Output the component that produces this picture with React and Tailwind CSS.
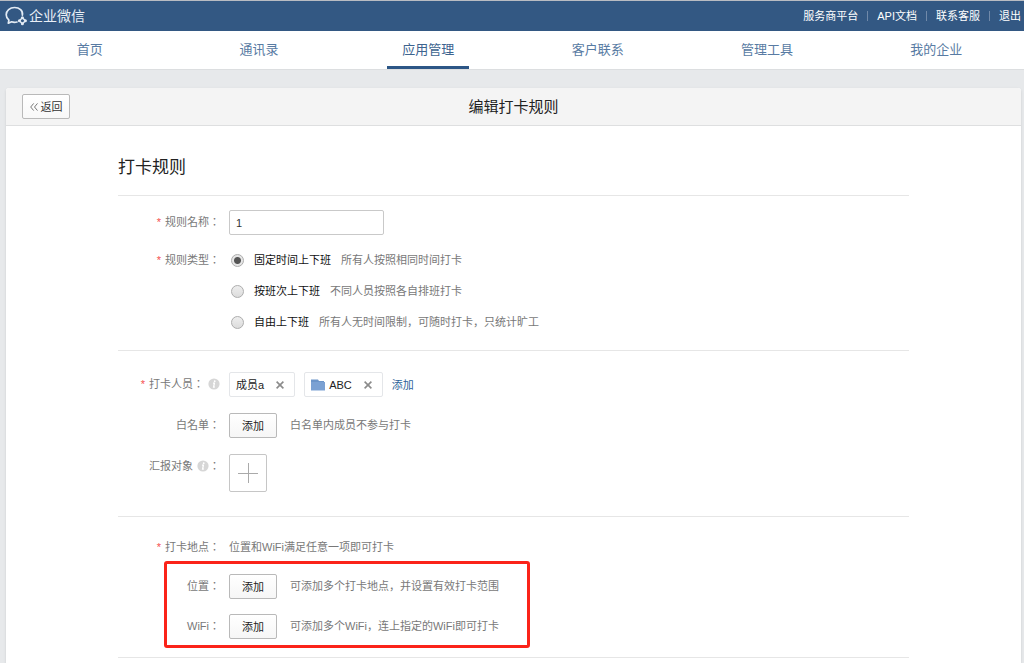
import React, { useState } from 'react';
import { clsx } from 'clsx';

const topLinks = ['服务商平台', 'API文档', '联系客服', '退出'];

const navItems = ['首页', '通讯录', '应用管理', '客户联系', '管理工具', '我的企业'];

const ruleTypes = [
    { id: 'fixed', name: '固定时间上下班', desc: '所有人按照相同时间打卡' },
    { id: 'shift', name: '按班次上下班', desc: '不同人员按照各自排班打卡' },
    { id: 'free', name: '自由上下班', desc: '所有人无时间限制，可随时打卡，只统计旷工' },
];

function Logo() {
    return (
        <svg width="22" height="20" viewBox="0 0 22 20" fill="none" stroke="#e3ebf4" strokeLinecap="round" strokeLinejoin="round" aria-hidden="true">
            <path strokeWidth="1.7" d="M17.4 9.2C18.2 4.8 14.4 1.5 9.6 1.5C4.8 1.5 1.2 4.6 1.2 8.8C1.2 11 2.3 12.9 3.9 14.2L3.3 17.2L6.6 15.8C8.6 16.5 10.4 16.4 12 16" />
            <path strokeWidth="1.5" d="M17.4 11.8L20.4 14.8L17.4 17.8L14.4 14.8Z" />
            <g fill="#e3ebf4" stroke="none">
                <circle cx="17.4" cy="11.8" r="1.5" />
                <circle cx="20.4" cy="14.8" r="1.5" />
                <circle cx="17.4" cy="17.8" r="1.5" />
                <circle cx="14.4" cy="14.8" r="1.5" />
            </g>
        </svg>
    );
}

function InfoIcon() {
    return (
        <svg width="12" height="12" viewBox="0 0 12 12" className="ml-1" aria-hidden="true">
            <circle cx="6" cy="6" r="5.6" fill="#d6d6d6" />
            <circle cx="6.7" cy="3.2" r="0.9" fill="#fff" />
            <path d="M5 5.2H6.4L5.6 9H6.8" fill="none" stroke="#fff" strokeWidth="1.3" />
        </svg>
    );
}

function FolderIcon() {
    return (
        <svg width="14" height="12" viewBox="0 0 14 12" className="mr-1" aria-hidden="true">
            <path d="M0 0.5H7L8 2H13V3H0Z" fill="#6c95c9" />
            <path d="M0 3H14V11.5H0Z" fill="#7ba1d3" />
        </svg>
    );
}

function CloseIcon() {
    return (
        <svg width="8" height="8" viewBox="0 0 8 8" stroke="#8b8b8b" strokeWidth="1.6" aria-hidden="true">
            <path d="M0.6 0.6L7.4 7.4M7.4 0.6L0.6 7.4" />
        </svg>
    );
}

function Hint({ children, className }) {
    return <span className={clsx('text-[#787878]', className)}>{children}</span>;
}

// the TC face centres the full-width colon
function Row({ label, required, htmlFor, children, suffix, info }) {
    const Label = htmlFor ? 'label' : 'div';
    return (
        <div className="flex items-start gap-[9px]">
            <Label
                htmlFor={htmlFor}
                className="flex h-6 w-[102px] shrink-0 items-center justify-end font-['Liberation_Sans','Noto_Sans_CJK_TC',sans-serif] text-[#787878]"
            >
                {required && <span className="mr-1 text-[#f5504e]">*</span>}
                <span>{label}</span>
                {info && <InfoIcon />}
                {suffix && <span>{suffix}</span>}
            </Label>
            {children}
        </div>
    );
}

function AddButton() {
    return (
        <button className="h-[25px] w-12 shrink-0 rounded-[2px] border border-[#b9b9b9] bg-linear-to-b from-white to-[#f6f6f6] text-[#222]">
            添加
        </button>
    );
}

function Tag({ name, folder, onRemove }) {
    return (
        <span className="flex h-[25px] items-center rounded-[2px] border border-[#e4e6e9] pr-[10px] pl-[6px] text-[#222]">
            {folder && <FolderIcon />}
            <span>{name}</span>
            <button aria-label={name} onClick={onRemove} className="ml-3">
                <CloseIcon />
            </button>
        </span>
    );
}

export default function App() {
    const [activeNav, setActiveNav] = useState('应用管理');
    const [ruleName, setRuleName] = useState('1');
    const [ruleType, setRuleType] = useState('fixed');
    const [members, setMembers] = useState([
        { name: '成员a' },
        { name: 'ABC', folder: true },
    ]);

    return (
        <div className="flex min-h-screen flex-col bg-[#e7e9eb] font-['Liberation_Sans','Noto_Sans_CJK_SC',sans-serif] text-[11px] leading-4">
            <header className="flex h-[31px] items-center justify-between border-t border-[#b9bcc2] bg-[#335883] pr-[3px] pl-[5px] text-white">
                <a href="#" className="flex items-center gap-[2px] text-sm text-[#e9eff6]">
                    <Logo />
                    企业微信
                </a>
                <div className="flex items-center">
                    {topLinks.map((link, i) => (
                        <React.Fragment key={link}>
                            {i > 0 && <span className="mx-[9px] h-[10px] w-px bg-[#7089a9]" />}
                            <a href="#">{link}</a>
                        </React.Fragment>
                    ))}
                </div>
            </header>

            <nav className="border-b border-[#dcdee0] bg-white pr-[3px] pl-[5px]">
                <ul className="grid grid-cols-6">
                    {navItems.map(item => (
                        <li key={item} className="flex justify-center">
                            <a
                                href="#"
                                onClick={() => setActiveNav(item)}
                                className={clsx(
                                    'flex h-[38px] w-[82px] items-center justify-center border-t-[3px] border-b-[3px] border-t-transparent text-[13px]',
                                    activeNav === item
                                        ? 'border-b-[#2c5686] text-[#3d648f]'
                                        : 'border-b-transparent text-[#587ba3]'
                                )}
                            >
                                {item}
                            </a>
                        </li>
                    ))}
                </ul>
            </nav>

            <main className="mt-[18px] mr-[3px] ml-[6px] flex-1 rounded-t-[3px] bg-white shadow-sm">
                <div className="grid h-[38px] grid-cols-[1fr_auto_1fr] items-center rounded-t-[3px] border-b border-[#dedfe0] bg-[#f4f4f4] px-4">
                    <button className="flex h-[25px] w-12 items-center justify-center gap-[3px] rounded-[2px] border border-[#b9b9b9] bg-linear-to-b from-white to-[#f8f8f8] text-[#333]">
                        <svg width="8" height="8" viewBox="0 0 8 8" fill="none" stroke="#777" aria-hidden="true">
                            <path d="M3.7 0.4L0.7 4L3.7 7.6M7.5 0.4L4.5 4L7.5 7.6" />
                        </svg>
                        返回
                    </button>
                    <h1 className="text-[15px] leading-5 text-[#222]">编辑打卡规则</h1>
                </div>

                <form className="px-28" onSubmit={e => e.preventDefault()}>
                    <h2 className="border-b border-[#e6e6e6] pt-[29px] pb-[14px] text-[17px] leading-[26px] text-[#222]">打卡规则</h2>

                    <section className="border-b border-[#e6e6e6] pt-[14px] pb-5">
                        <Row label="规则名称：" required htmlFor="rule-name">
                            <input
                                id="rule-name"
                                value={ruleName}
                                onChange={e => setRuleName(e.target.value)}
                                className="h-[25px] w-[155px] rounded-[2px] border border-[#c9c9c9] px-[6px] text-[#333] outline-none"
                            />
                        </Row>
                        <div className="mt-[13px]">
                            <Row label="规则类型：" required>
                                <div className="flex flex-col gap-[15px] pt-1">
                                    {ruleTypes.map(type => (
                                        <label key={type.id} className="flex items-center pl-[2px]">
                                            <input
                                                type="radio"
                                                name="rule-type"
                                                checked={ruleType === type.id}
                                                onChange={() => setRuleType(type.id)}
                                                className="mr-[10px] size-[13px] appearance-none rounded-full border border-[#adadad] bg-linear-to-b from-[#eee] to-[#dcdcdc] checked:bg-[radial-gradient(circle,#555_0_3px,#e6e6e6_4px)]"
                                            />
                                            <span className="mr-[10px] text-[#111]">{type.name}</span>
                                            <Hint>{type.desc}</Hint>
                                        </label>
                                    ))}
                                </div>
                            </Row>
                        </div>
                    </section>

                    <section className="flex flex-col gap-4 border-b border-[#e6e6e6] pt-[21px] pb-6">
                        <Row label="打卡人员：" required info>
                            <div className="flex items-center gap-[9px]">
                                {members.map(m => (
                                    <Tag
                                        key={m.name}
                                        name={m.name}
                                        folder={m.folder}
                                        onRemove={() => setMembers(members.filter(x => x !== m))}
                                    />
                                ))}
                                <a href="#" className="text-[#2d6299]">添加</a>
                            </div>
                        </Row>
                        <Row label="白名单：">
                            <AddButton />
                            <Hint className="ml-1 leading-6">白名单内成员不参与打卡</Hint>
                        </Row>
                        <Row label="汇报对象" info suffix="：">
                            <button aria-label="添加" className="flex size-[38px] items-center justify-center rounded-[2px] border border-[#c6c6c6]">
                                <svg width="20" height="20" viewBox="0 0 20 20" stroke="#aaa" aria-hidden="true">
                                    <path d="M10.5 0V20M0 10.5H20" />
                                </svg>
                            </button>
                        </Row>
                    </section>

                    <section className="border-b border-[#e6e6e6] pt-[18px] pb-[18px]">
                        <Row label="打卡地点：" required>
                            <Hint className="leading-6">位置和WiFi满足任意一项即可打卡</Hint>
                        </Row>
                        <div className="relative mt-[15px] flex flex-col gap-[15px]">
                            <Row label="位置：">
                                <AddButton />
                                <Hint className="ml-1 leading-6">可添加多个打卡地点，并设置有效打卡范围</Hint>
                            </Row>
                            <Row label="WiFi：">
                                <AddButton />
                                <Hint className="ml-1 leading-6">可添加多个WiFi，连上指定的WiFi即可打卡</Hint>
                            </Row>
                            {/* highlight around the location settings */}
                            <div className="pointer-events-none absolute -top-[13px] -bottom-[9px] left-[46px] w-[366px] rounded-[3px] border-[3px] border-[#fb2319]" />
                        </div>
                    </section>
                </form>
            </main>
        </div>
    );
}
